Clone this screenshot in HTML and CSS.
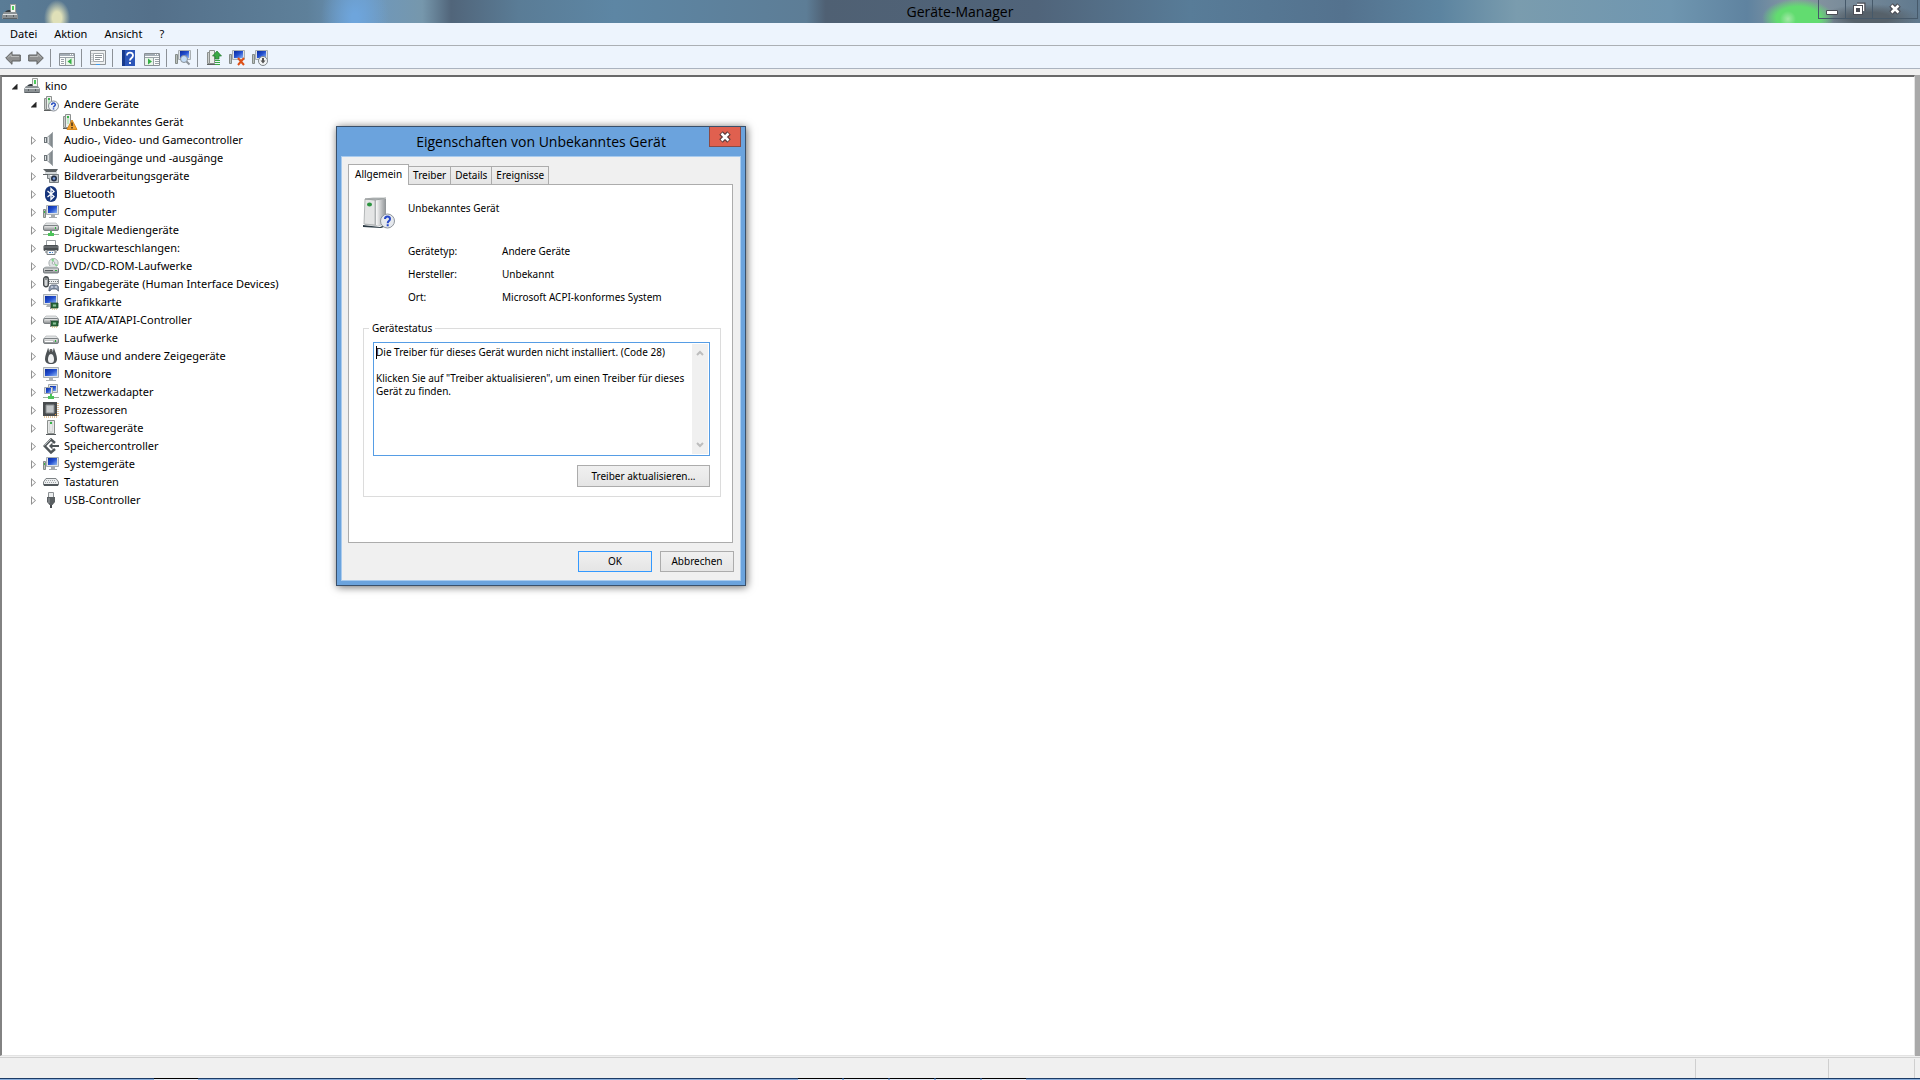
FILE: index.html
```
<!DOCTYPE html>
<html lang="de">

<head>
	<title>Geräte-Manager</title>
	<meta charset="utf-8"/>
	<meta name="viewport" content="width=device-width, initial-scale=1"/>

	<link rel="stylesheet" href="styles.css">
</head>

<body>
	<svg class="defs" width="0" height="0" aria-hidden="true">
		<linearGradient id="metal" x1="0" x2="1"><stop offset="0" stop-color="#fafafa"/><stop offset="1" stop-color="#8e9295"/></linearGradient>
		<linearGradient id="metal-v" x1="0" x2="0" y1="0" y2="1"><stop offset="0" stop-color="#f2f2f2"/><stop offset="1" stop-color="#85898b"/></linearGradient>
		<linearGradient id="cone" x1="0" x2="1"><stop offset="0" stop-color="#b9bfc2"/><stop offset="1" stop-color="#6f767a"/></linearGradient>
		<linearGradient id="screen" x1="0" x2="1" y1="0" y2="1"><stop offset="0" stop-color="#0a2a9c"/><stop offset=".5" stop-color="#2450d0"/><stop offset="1" stop-color="#8fb8f4"/></linearGradient>

		<symbol id="i-pc" viewBox="0 0 16 16">
			<path d="M8.500.5h5v10h-5z" fill="#f4f6f4" stroke="#9a9e9a"/>
			<path d="M10 2h2v4h-2z" fill="#4fc95c"/>
			<path d="M3 8c2-2 3-2 5-2l1 3H3z" fill="#333b40"/>
			<path d="M2 8h12l2 3v4H0v-4z" fill="#8b9194"/>
			<path d="M1 10.500h14" stroke="#dfe3e5"/>
			<path d="M1 14.500h14M4.500 11v2M11.500 11v2" stroke="#5a6064"/>
		</symbol>
		<symbol id="i-tower" viewBox="0 0 16 16">
			<path d="M3.500.5h5v13h-5z" fill="#eceeec" stroke="#8c908e"/>
			<path d="M1.500 2.500h2v11h-2z" fill="#c9ccca" stroke="#8c908e"/>
			<path d="M5 2h2v8H5z" fill="#bfe6c4"/>
			<path d="M5 2h2v2H5z" fill="#39b54a"/>
			<path d="M1 14h8v1H1z" fill="#5c6060"/>
		</symbol>
		<symbol id="i-other" viewBox="0 0 16 16">
			<use href="#i-tower"/>
			<circle cx="10.500" cy="10" r="5" fill="#eef1f6" stroke="#8a919a"/>
			<path d="M8.700 9c0-2.500 3.600-2.500 3.600-.2 0 1.500-1.800 1.200-1.800 2.700M10.500 12.300v1.300" fill="none" stroke="#2a4fc0" stroke-width="1.500"/>
		</symbol>
		<symbol id="i-warn" viewBox="0 0 16 16">
			<use href="#i-tower"/>
			<path d="M10 6l5 9.500H5z" fill="#f0a030" stroke="#d88a20" stroke-linejoin="round"/>
			<path d="M10 8.500v3.500M10 13v1.500" stroke="#3a2c18" stroke-width="1.400"/>
		</symbol>
		<symbol id="i-sound" viewBox="0 0 16 16">
			<path d="M1 5h4v6H1z" fill="#6d7478"/>
			<path d="M4 5l6-5v16l-6-5z" fill="url(#cone)"/>
			<path d="M9.500 1v14" stroke="#9ba2a6"/>
			<path d="M2.500 6v4M5.500 5v6" stroke="#dde1e3"/>
		</symbol>
		<symbol id="i-imaging" viewBox="0 0 16 16">
			<path d="M0 1h15l-2 3H3z" fill="#5c6164"/>
			<path d="M2 4h12v2H2z" fill="#d4d8da"/>
			<path d="M4.500 6.500h11v8h-9v-4h-2z" fill="#c4c8ca" stroke="#777d80"/>
			<path d="M0 6.500h5" stroke="#5c6164"/>
			<circle cx="11" cy="10.500" r="3" fill="#27324a"/>
			<circle cx="11" cy="10.500" r="1.300" fill="#7aa0e0"/>
			<path d="M7 7.500h2" stroke="#fff"/>
		</symbol>
		<symbol id="i-bt" viewBox="0 0 16 16">
			<rect x="2" y="0" width="12" height="16" rx="6" fill="#16357c"/>
			<path d="M4.500 5l6.500 5.500L8 13.500v-11l3 3L4.500 11" fill="none" stroke="#fff" stroke-width="1.300"/>
		</symbol>
		<symbol id="i-monitor" viewBox="0 0 16 16">
			<path d="M.5 1.500h15v10H.5z" fill="#dfe3e6" stroke="#a9afb3"/>
			<path d="M2 3h12v7H2z" fill="url(#screen)"/>
			<path d="M6 12h4v2H6zM3 14h10v1H3z" fill="#aeb3b6"/>
		</symbol>
		<symbol id="i-computer" viewBox="0 0 16 16">
			<path d="M3.500 1.500h12v9h-12z" fill="#dfe3e6" stroke="#a9afb3"/>
			<path d="M5 2h9v7H5z" fill="url(#screen)"/>
			<path d="M8 11h4v2H8zM6 13h8v1H6z" fill="#a6abae"/>
			<path d="M.5 5.500h2v8h-2z" fill="#b9c0bc" stroke="#858b88"/>
			<path d="M1 7h1v2H1z" fill="#39b54a"/>
		</symbol>
		<symbol id="i-disk" viewBox="0 0 16 16">
			<path d="M3 6h10l2.500 3H.5z" fill="#e3e5e6" stroke="#a2a6a8" stroke-width=".6"/>
			<rect x=".5" y="8.500" width="15" height="5" rx="1.500" fill="url(#metal-v)" stroke="#7c8184"/>
			<path d="M12 10h1v2h-1z" fill="#2fb040"/>
			<path d="M2 11.500h8" stroke="#fff"/>
		</symbol>
		<symbol id="i-media" viewBox="0 0 16 16">
			<path d="M3 1h10l2.500 3H.5z" fill="#e3e5e6" stroke="#a2a6a8" stroke-width=".6"/>
			<rect x=".5" y="3.500" width="15" height="5" rx="1.500" fill="url(#metal-v)" stroke="#7c8184"/>
			<path d="M12 5h1v2h-1z" fill="#2fb040"/>
			<path d="M7 9h2v2h2v3H5v-3h2z" fill="#4cc35a"/>
			<path d="M0 12.500h5M11 12.500h5" stroke="#9ab09d"/>
		</symbol>
		<symbol id="i-printer" viewBox="0 0 16 16">
			<path d="M3.500.5h9v5h-9z" fill="#fff" stroke="#9a9fa2"/>
			<rect x=".5" y="5" width="15" height="6" rx="1.500" fill="#4a4f52"/>
			<path d="M2 10h12v3H2z" fill="#b6babc"/>
			<path d="M4 10.500h8v4H4z" fill="#f5f8fb" stroke="#777c80"/>
			<path d="M6 12.500h2M9 12.500h1" stroke="#3c7ec8"/>
			<path d="M1 7h14" stroke="#82878a"/>
		</symbol>
		<symbol id="i-dvd" viewBox="0 0 16 16">
			<circle cx="10.500" cy="5" r="4.600" fill="#dfe4e4" stroke="#a8aeb0"/>
			<path d="M10.500 5L8 1.500l3-1zM10.500 5l4 2-1 2z" fill="#7fd68a"/>
			<circle cx="10.500" cy="5" r="1.300" fill="#fff" stroke="#a8aeb0"/>
			<path d="M3 8h10l2.500 2H.5z" fill="#d8dbdc"/>
			<rect x=".5" y="10" width="15" height="5" rx="1" fill="url(#metal-v)" stroke="#777c80"/>
			<path d="M2 12.500h8" stroke="#555a5d"/>
			<path d="M12 12h2v1h-2z" fill="#2fb040"/>
		</symbol>
		<symbol id="i-hid" viewBox="0 0 16 16">
			<path d="M5 3.500h10.500v4H5z" fill="#eceeef" stroke="#989da0"/>
			<path d="M6 5.500h9" stroke="#777c80" stroke-dasharray="1 1"/>
			<rect x=".7" y=".7" width="4.600" height="10" rx="2.300" fill="#d4d6d7" stroke="#43484b" stroke-width="1.400"/>
			<path d="M3 1v3" stroke="#43484b"/>
			<path d="M6 15c0-4 1-6 3-6h4c2 0 3 2 3 6-2 0-2-2-3-2H9c-1 0-1 2-3 2z" fill="#8b98ac" stroke="#4c586c" stroke-width=".8"/>
			<path d="M8 11h2M12 11h2" stroke="#e8eefc"/>
		</symbol>
		<symbol id="i-chip" viewBox="0 0 16 16">
			<path d="M8 9h7v5H8z" fill="#2c6a3c" stroke="#1d4829" stroke-width=".8"/>
			<path d="M10 10.500h3v2h-3z" fill="#8fc39a"/>
			<path d="M9 15h6" stroke="#c6a84a" stroke-dasharray="1 1"/>
			<path d="M7.500 8v7" stroke="#888"/>
		</symbol>
		<symbol id="i-display" viewBox="0 0 16 16">
			<path d="M.5.5h14v10H.5z" fill="#dfe3e6" stroke="#a9afb3"/>
			<path d="M2 2h11v7H2z" fill="url(#screen)"/>
			<path d="M4 11h3v2H3z" fill="#aeb3b6"/>
			<use href="#i-chip"/>
		</symbol>
		<symbol id="i-ide" viewBox="0 0 16 16">
			<path d="M3 4h10l2.500 2.500H.5z" fill="#e3e5e6" stroke="#a2a6a8" stroke-width=".6"/>
			<rect x=".5" y="6.500" width="15" height="5" rx="1.500" fill="url(#metal-v)" stroke="#7c8184"/>
			<use href="#i-chip"/>
		</symbol>
		<symbol id="i-mouse" viewBox="0 0 16 16">
			<path d="M5 0C4 4 2 7 2 11c0 3 2 5 6 5s6-2 6-5c0-4-2-7-3-11L8 4z" fill="#4d5255"/>
			<path d="M8 6c-2 0-3 3-3 5.500S6 15 8 15s3-1 3-3.500S10 6 8 6z" fill="#eff0f1"/>
			<path d="M5.500 1.500L8 5l2.500-3.500" fill="none" stroke="#b7bcbf"/>
			<path d="M8 1v4" stroke="#333" stroke-width="1.500"/>
		</symbol>
		<symbol id="i-net" viewBox="0 0 16 16">
			<path d="M5.500.5h9v8h-9z" fill="#dfe3e6" stroke="#a2a8ac"/>
			<path d="M7 2h6v5H7z" fill="url(#screen)"/>
			<path d="M1.500 3.500h8v6h-8z" fill="#dfe3e6" stroke="#a2a8ac"/>
			<path d="M3 4h5v5H3z" fill="url(#screen)"/>
			<path d="M7 10h2v2h2v3H5v-3h2z" fill="#4cc35a"/>
			<path d="M0 13.500h5M11 13.500h5" stroke="#9ab09d"/>
		</symbol>
		<symbol id="i-cpu" viewBox="0 0 16 16">
			<path d="M0 0h14v14H0z" fill="#494c4e"/>
			<path d="M3 3h8v8H3z" fill="#c3c6c7" stroke="#888c8e"/>
			<path d="M1 15h14M15 1v14" stroke="#c98c3c" stroke-dasharray="1 1"/>
			<path d="M12 12h1v1h-1z" fill="#f0a040"/>
		</symbol>
		<symbol id="i-soft" viewBox="0 0 16 16">
			<path d="M4.500.5h7v13h-7z" fill="#e6e8e7" stroke="#8c908e"/>
			<path d="M7 2h2v10H7z" fill="#fff" stroke="#b0b4b2" stroke-width=".6"/>
			<path d="M7 2h2v2H7z" fill="#39b54a"/>
			<path d="M3 14h10v1H3z" fill="#555a5c"/>
		</symbol>
		<symbol id="i-storage" viewBox="0 0 16 16">
			<path d="M12 5L8 1.500 1.700 8 8 14.500l4-3.500" fill="none" stroke="#4f5558" stroke-width="2.500"/>
			<path d="M8 8h8" stroke="#4f5558" stroke-width="2"/>
			<path d="M9.500 4.500v7L6 8z" fill="#4f5558"/>
			<path d="M1.500 7.500L8 1" stroke="#b4babd"/>
		</symbol>
		<symbol id="i-keyboard" viewBox="0 0 16 16">
			<path d="M3 4.500h10l2.500 3.500v3H.5V8z" fill="#eceeef" stroke="#7d8285"/>
			<path d="M3 6.500h10M2 8.500h12" stroke="#a0a5a8" stroke-dasharray="1 1"/>
			<path d="M1 11h14" stroke="#50565a" stroke-width="2"/>
		</symbol>
		<symbol id="i-usb" viewBox="0 0 16 16">
			<path d="M5.500.5h5v5h-5z" fill="#eceeef" stroke="#8c9093"/>
			<path d="M4 5h8v5l-2.500 3h-3L4 10z" fill="#5a5f62"/>
			<path d="M6 6v5" stroke="#9ca1a4"/>
			<path d="M8 13v3" stroke="#44494c" stroke-width="2"/>
		</symbol>

		<symbol id="t-arrow" viewBox="0 0 16 16">
			<path d="M.7 8L7 1.700V5h8.300v6H7v3.300z" fill="#8f9090" stroke="#5e6060" stroke-linejoin="round"/>
			<path d="M3 7.500L6 4.500v2h8" fill="none" stroke="#b9baba"/>
		</symbol>
		<symbol id="t-tree" viewBox="0 0 16 16">
			<path d="M.5 3.500h15v12H.5z" fill="#fbfcfc" stroke="#8a9095"/>
			<path d="M1 4h14v2H1z" fill="#a4adb5"/>
			<path d="M11 4.500h1M13 4.500h1" stroke="#fff"/>
			<path d="M1 7.500h14M6.500 8v7" stroke="#9aa2a8"/>
			<path d="M2 9.500h3M2 11.500h3M2 13.500h3" stroke="#9aa2a8"/>
			<path d="M7 8h8v7H7z" fill="#e9f5ea"/>
			<path d="M12.500 8.500v6L8.500 11.500z" fill="#35b045"/>
		</symbol>
		<symbol id="t-props" viewBox="0 0 16 16">
			<path d="M.5.5h15v14H.5z" fill="#eef0f1" stroke="#8f9498"/>
			<path d="M3.500 3.500h10v8h-10z" fill="#fff" stroke="#a6abaf"/>
			<path d="M5 5.500h7M5 7.500h7M5 9.500h5" stroke="#8d9499"/>
			<path d="M2 3v9" stroke="#a6abaf" stroke-dasharray="1 1"/>
			<path d="M6 14h4v1H6z" fill="#3d9cf0"/>
		</symbol>
		<symbol id="t-help" viewBox="0 0 16 16">
			<path d="M1 0h13v16H1z" fill="#2b55b8"/>
			<path d="M1 0h3v16H1z" fill="#173a8c"/>
			<path d="M6 5.500C6 1.500 12 2 12 5.500 12 8 9 8 9 10.500M9 12v2" fill="none" stroke="#fff" stroke-width="1.800"/>
		</symbol>
		<symbol id="t-panel" viewBox="0 0 16 16">
			<path d="M.5 3.500h15v12H.5z" fill="#fbfcfc" stroke="#8a9095"/>
			<path d="M1 4h14v2H1z" fill="#a4adb5"/>
			<path d="M11 4.500h1M13 4.500h1" stroke="#fff"/>
			<path d="M1 7.500h14M9.500 8v7" stroke="#9aa2a8"/>
			<path d="M11 9.500h4M11 11.500h4M11 13.500h4" stroke="#9aa2a8"/>
			<path d="M1 8h8v7H1z" fill="#e9f5ea"/>
			<path d="M4 8.500v6l4-3z" fill="#35b045"/>
		</symbol>
		<symbol id="t-scan" viewBox="0 0 16 16">
			<path d="M3.500.5h12v9h-12z" fill="#dfe3e6" stroke="#a9afb3"/>
			<path d="M5 1h9v7H5z" fill="url(#screen)"/>
			<path d="M.5 4.500h2v9h-2z" fill="#b9c0bc" stroke="#858b88"/>
			<circle cx="9" cy="9" r="3.500" fill="#c3dcf6" stroke="#8b9299"/>
			<path d="M11.500 11.500l3 3" stroke="#8b9299" stroke-width="2"/>
		</symbol>
		<symbol id="t-update" viewBox="0 0 16 16">
			<path d="M3.500.5h5v13h-5z" fill="#eceeec" stroke="#8c908e"/>
			<path d="M1.500 2.500h2v11h-2z" fill="#c9ccca" stroke="#8c908e"/>
			<path d="M1 14h9v1H1z" fill="#5c6060"/>
			<path d="M11 1l4.500 5h-2.500v3H9V6H6.500z" fill="#3aa845" stroke="#257a30" stroke-width=".7"/>
			<path d="M9 10.500h5M9 12.500h5M9 14.500h5" stroke="#3aa845"/>
		</symbol>
		<symbol id="t-remove" viewBox="0 0 16 16">
			<path d="M3.500.5h12v9h-12z" fill="#dfe3e6" stroke="#a9afb3"/>
			<path d="M5 1h9v7H5z" fill="url(#screen)"/>
			<path d="M.5 4.500h2v9h-2z" fill="#b9c0bc" stroke="#858b88"/>
			<path d="M9 8l6 7M15 8l-6 7" stroke="#dd5018" stroke-width="2"/>
		</symbol>
		<symbol id="t-disable" viewBox="0 0 16 16">
			<path d="M3.500.5h12v9h-12z" fill="#dfe3e6" stroke="#a9afb3"/>
			<path d="M5 1h9v7H5z" fill="url(#screen)"/>
			<path d="M.5 4.500h2v9h-2z" fill="#b9c0bc" stroke="#858b88"/>
			<circle cx="11" cy="11" r="4.500" fill="#f3f5f6" stroke="#7f868b"/>
			<path d="M11 8v3" stroke="#555" stroke-width="2"/>
			<path d="M8.500 10.500h5L11 13.500z" fill="#555"/>
		</symbol>
	</svg>

	<header class="titlebar">
		<svg class="icon"><use href="#i-pc"/></svg>
		<h1>Geräte-Manager</h1>
		<div class="window-buttons">
			<button class="min" aria-label="Minimieren"><svg width="14" height="12" viewBox="0 0 14 12"><path d="M1.500 5.500h11v4h-11z" fill="#fff" stroke="#4b4d55"/></svg></button>
			<button class="max" aria-label="Verkleinern"><svg width="14" height="14" viewBox="0 0 14 14"><path d="M5 2.500h6.500V9" fill="none" stroke="#4b4d55" stroke-width="4"/><path d="M5 2.500h6.500V9" fill="none" stroke="#fff" stroke-width="1.500"/><path d="M3 5h6v6H3z" fill="none" stroke="#4b4d55" stroke-width="4"/><path d="M3 5h6v6H3z" fill="#4b4d55" stroke="#fff" stroke-width="2"/></svg></button>
			<button class="close" aria-label="Schließen"><svg width="14" height="12" viewBox="0 0 14 12"><path d="M3 2l8 8M11 2l-8 8" stroke="#4b4d55" stroke-width="5"/><path d="M3.500 2.500l7 7M10.500 2.500l-7 7" stroke="#fff" stroke-width="2.500"/></svg></button>
		</div>
	</header>

	<nav class="menubar">
		<button>Datei</button>
		<button>Aktion</button>
		<button>Ansicht</button>
		<button>?</button>
	</nav>

	<div class="toolbar">
		<button aria-label="Zurück"><svg class="icon"><use href="#t-arrow"/></svg></button>
		<button aria-label="Vorwärts"><svg class="icon flip"><use href="#t-arrow"/></svg></button>
		<span class="sep"></span>
		<button aria-label="Konsolenstruktur"><svg class="icon"><use href="#t-tree"/></svg></button>
		<span class="sep"></span>
		<button aria-label="Eigenschaften"><svg class="icon"><use href="#t-props"/></svg></button>
		<span class="sep"></span>
		<button aria-label="Hilfe"><svg class="icon"><use href="#t-help"/></svg></button>
		<button aria-label="Aktionsbereich"><svg class="icon"><use href="#t-panel"/></svg></button>
		<span class="sep"></span>
		<button aria-label="Nach geänderter Hardware suchen"><svg class="icon"><use href="#t-scan"/></svg></button>
		<span class="sep"></span>
		<button aria-label="Treibersoftware aktualisieren"><svg class="icon"><use href="#t-update"/></svg></button>
		<button aria-label="Deinstallieren"><svg class="icon"><use href="#t-remove"/></svg></button>
		<button aria-label="Deaktivieren"><svg class="icon"><use href="#t-disable"/></svg></button>
	</div>

	<main>
		<ul class="tree">
			<li>
				<div class="node"><button class="toggle open" aria-label="Reduzieren"></button><svg class="icon"><use href="#i-pc"/></svg><span>kino</span></div>
				<ul>
					<li>
						<div class="node"><button class="toggle open" aria-label="Reduzieren"></button><svg class="icon"><use href="#i-other"/></svg><span>Andere Geräte</span></div>
						<ul>
							<li><div class="node leaf"><svg class="icon"><use href="#i-warn"/></svg><span>Unbekanntes Gerät</span></div></li>
						</ul>
					</li>
					<li><div class="node"><button class="toggle" aria-label="Erweitern"></button><svg class="icon"><use href="#i-sound"/></svg><span>Audio-, Video- und Gamecontroller</span></div></li>
					<li><div class="node"><button class="toggle" aria-label="Erweitern"></button><svg class="icon"><use href="#i-sound"/></svg><span>Audioeingänge und -ausgänge</span></div></li>
					<li><div class="node"><button class="toggle" aria-label="Erweitern"></button><svg class="icon"><use href="#i-imaging"/></svg><span>Bildverarbeitungsgeräte</span></div></li>
					<li><div class="node"><button class="toggle" aria-label="Erweitern"></button><svg class="icon"><use href="#i-bt"/></svg><span>Bluetooth</span></div></li>
					<li><div class="node"><button class="toggle" aria-label="Erweitern"></button><svg class="icon"><use href="#i-computer"/></svg><span>Computer</span></div></li>
					<li><div class="node"><button class="toggle" aria-label="Erweitern"></button><svg class="icon"><use href="#i-media"/></svg><span>Digitale Mediengeräte</span></div></li>
					<li><div class="node"><button class="toggle" aria-label="Erweitern"></button><svg class="icon"><use href="#i-printer"/></svg><span>Druckwarteschlangen:</span></div></li>
					<li><div class="node"><button class="toggle" aria-label="Erweitern"></button><svg class="icon"><use href="#i-dvd"/></svg><span>DVD/CD-ROM-Laufwerke</span></div></li>
					<li><div class="node"><button class="toggle" aria-label="Erweitern"></button><svg class="icon"><use href="#i-hid"/></svg><span>Eingabegeräte (Human Interface Devices)</span></div></li>
					<li><div class="node"><button class="toggle" aria-label="Erweitern"></button><svg class="icon"><use href="#i-display"/></svg><span>Grafikkarte</span></div></li>
					<li><div class="node"><button class="toggle" aria-label="Erweitern"></button><svg class="icon"><use href="#i-ide"/></svg><span>IDE ATA/ATAPI-Controller</span></div></li>
					<li><div class="node"><button class="toggle" aria-label="Erweitern"></button><svg class="icon"><use href="#i-disk"/></svg><span>Laufwerke</span></div></li>
					<li><div class="node"><button class="toggle" aria-label="Erweitern"></button><svg class="icon"><use href="#i-mouse"/></svg><span>Mäuse und andere Zeigegeräte</span></div></li>
					<li><div class="node"><button class="toggle" aria-label="Erweitern"></button><svg class="icon"><use href="#i-monitor"/></svg><span>Monitore</span></div></li>
					<li><div class="node"><button class="toggle" aria-label="Erweitern"></button><svg class="icon"><use href="#i-net"/></svg><span>Netzwerkadapter</span></div></li>
					<li><div class="node"><button class="toggle" aria-label="Erweitern"></button><svg class="icon"><use href="#i-cpu"/></svg><span>Prozessoren</span></div></li>
					<li><div class="node"><button class="toggle" aria-label="Erweitern"></button><svg class="icon"><use href="#i-soft"/></svg><span>Softwaregeräte</span></div></li>
					<li><div class="node"><button class="toggle" aria-label="Erweitern"></button><svg class="icon"><use href="#i-storage"/></svg><span>Speichercontroller</span></div></li>
					<li><div class="node"><button class="toggle" aria-label="Erweitern"></button><svg class="icon"><use href="#i-computer"/></svg><span>Systemgeräte</span></div></li>
					<li><div class="node"><button class="toggle" aria-label="Erweitern"></button><svg class="icon"><use href="#i-keyboard"/></svg><span>Tastaturen</span></div></li>
					<li><div class="node"><button class="toggle" aria-label="Erweitern"></button><svg class="icon"><use href="#i-usb"/></svg><span>USB-Controller</span></div></li>
				</ul>
			</li>
		</ul>
	</main>

	<footer class="statusbar">
		<span class="cell wide"></span>
		<span class="cell mid"></span>
		<span class="cell end"></span>
	</footer>
	<div class="taskbar">
		<span class="task first"></span>
		<span class="task"></span>
		<span class="task"></span>
		<span class="task"></span>
		<span class="task"></span>
		<span class="task"></span>
	</div>

	<section class="dialog" role="dialog" aria-labelledby="dialog-title">
		<header class="dialog-head">
			<h2 id="dialog-title">Eigenschaften von Unbekanntes Gerät</h2>
			<button class="dialog-close" aria-label="Schließen"><svg width="14" height="12" viewBox="0 0 14 12"><path d="M3 2l8 8M11 2l-8 8" stroke="#5c3a3a" stroke-width="5"/><path d="M3.500 2.500l7 7M10.500 2.500l-7 7" stroke="#fff" stroke-width="2.500"/></svg></button>
		</header>
		<div class="dialog-body">
			<div class="tabs" role="tablist">
				<button class="tab active" role="tab" aria-selected="true">Allgemein</button>
				<button class="tab" role="tab">Treiber</button>
				<button class="tab" role="tab">Details</button>
				<button class="tab" role="tab">Ereignisse</button>
			</div>
			<div class="page">
				<div class="device">
					<svg width="32" height="32" viewBox="0 0 32 32" aria-hidden="true">
						<path d="M0 28l17 2 7-3v2l-6 2-18-1z" fill="#2c3b44"/>
						<path d="M2 2l11-1 10 1-1 25-6 2-14-1z" fill="#a9adaf"/>
						<path d="M2 2l10 1v25L1 27z" fill="#e4e5e5" stroke="#b4b7b8"/>
						<path d="M13 3l10-1v24l-8 3-2-1z" fill="url(#metal)"/>
						<path d="M2 2l8-1h13l-10 2z" fill="#b4b8b9" stroke="#8f9394" stroke-width=".6"/>
						<ellipse cx="6.500" cy="7.500" rx="2.500" ry="2" fill="#2d9440"/>
						<circle cx="24.500" cy="24" r="7" fill="#e6e9ee" stroke="#8f959c"/>
						<path d="M22 22c0-3.500 5-3.500 5 0 0 2.200-2.300 2-2.300 4.200M24.700 27.300v2" fill="none" stroke="#2748c8" stroke-width="2"/>
					</svg>
					<span>Unbekanntes Gerät</span>
				</div>
				<dl class="props">
					<dt>Gerätetyp:</dt><dd>Andere Geräte</dd>
					<dt>Hersteller:</dt><dd>Unbekannt</dd>
					<dt>Ort:</dt><dd>Microsoft ACPI-konformes System</dd>
				</dl>
				<fieldset class="status">
					<legend><label for="status-text">Gerätestatus</label></legend>
					<div class="status-box">
						<textarea id="status-text" readonly>Die Treiber für dieses Gerät wurden nicht installiert. (Code 28)

Klicken Sie auf "Treiber aktualisieren", um einen Treiber für dieses Gerät zu finden.</textarea>
						<span class="caret"></span>
						<div class="scroll">
							<svg width="8" height="6" viewBox="0 0 8 6"><path d="M1 5l3-3 3 3" fill="none" stroke="#bdbdbd" stroke-width="2"/></svg>
							<svg width="8" height="6" viewBox="0 0 8 6"><path d="M1 1l3 3 3-3" fill="none" stroke="#bdbdbd" stroke-width="2"/></svg>
						</div>
					</div>
					<button class="btn update">Treiber aktualisieren...</button>
				</fieldset>
			</div>
			<div class="actions">
				<button class="btn default">OK</button>
				<button class="btn">Abbrechen</button>
			</div>
		</div>
	</section>
</body>
</html>
```
FILE: styles.css
```
* {
	box-sizing: border-box;
}

body {
	margin: 0;
	min-height: 100vh;
	display: flex;
	flex-direction: column;
	background: #f0f0f0;
	color: #000;
	font: 11px/18px "Noto Sans", "Open Sans", sans-serif;
}

button {
	margin: 0;
	padding: 0;
	border: 0;
	background: none;
	color: inherit;
	font: inherit;
}

h1, h2 {
	margin: 0;
	font: 14px/20px "Open Sans", sans-serif;
}

ul {
	margin: 0;
	padding: 0;
	list-style: none;
}

svg {
	display: block;
}

.defs {
	position: absolute;
}

.icon {
	width: 16px;
	height: 16px;
	flex: none;
}

.flip {
	transform: scaleX(-1);
}

/* main window */
.titlebar {
	height: 23px;
	display: grid;
	grid-template-columns: 1fr auto 1fr;
	align-items: center;
	padding: 0 2px;
	background:
		radial-gradient(ellipse 13px 18px at 57px 18px, #dfe0b8 35%, transparent),
		radial-gradient(ellipse 8px 8px at 1788px 19px, #a2e8a6, transparent),
		radial-gradient(ellipse 36px 19px at 1798px 18px, #62dc70 60%, transparent),
		radial-gradient(ellipse 50px 14px at 1870px 18px, #56616a 40%, transparent),
		radial-gradient(ellipse 34px 50px at 355px 18px, #6ea5dc 10%, transparent),
		linear-gradient(90deg, #5a7c96 0, #54708a 8%, #5e809a 16%, #6d98be 19%, #7697ac 22%, #51657a 23.500%, #5a7c96 27%, #5d86a4 32%, #5d7d96 42%, #4f6073 43%, #50647a 54%, #587c98 62%, #54728e 70%, #5c84a0 75%, #7a9cae 79%, #6f96b0 87%, #5f83a0 91%, #8a98a2 93.500%, #60798e 100%);
}

.titlebar h1 {
	padding-top: 1px;
}

.window-buttons {
	justify-self: end;
	align-self: start;
	height: 19px;
	display: flex;
	border: 1px solid #46596a;
	border-top: 0;
}

.window-buttons button {
	display: flex;
	align-items: center;
	justify-content: center;
}

.window-buttons .min,
.window-buttons .max {
	width: 27px;
	border-right: 1px solid #46596a;
}

.window-buttons .min {
	padding-top: 4px;
}

.window-buttons .close {
	width: 44px;
}

.menubar {
	height: 23px;
	display: flex;
	align-items: center;
	gap: 17px;
	padding: 0 10px;
	background: #edf4fd;
	border-bottom: 1px solid #abafb4;
}

.toolbar {
	height: 23px;
	display: flex;
	align-items: center;
	gap: 7px;
	padding: 2px 5px 0;
	background: #edf4fd;
	border-bottom: 1px solid #abb3bf;
}

.sep {
	width: 1px;
	height: 18px;
	margin: 0 1px 0 -1px;
	background: #8c9197;
}

main {
	flex: 1;
	margin: 6px 5px 1px 0;
	padding-left: 6px;
	background: #fff;
	border: 1px solid #e3e3e3;
	border-top: 2px solid #696969;
	border-left: 2px solid #828282;
	box-shadow: 5px 0 #a9a9a9;
	clip-path: inset(0 -5px 0 0);
}

.tree ul {
	padding-left: 19px;
}

.node {
	height: 18px;
	display: flex;
	align-items: center;
	white-space: nowrap;
}

.node .icon {
	margin-right: 5px;
}

.leaf {
	padding-left: 16px;
}

.toggle {
	width: 13px;
	height: 16px;
	margin-right: 3px;
	display: flex;
	align-items: center;
	justify-content: center;
}

.toggle::before {
	content: "";
	width: 5px;
	height: 9px;
	margin-top: 1px;
	background: #909090;
	clip-path: polygon(0 0, 100% 50%, 0 100%, 0 12%, 1px 22%, 1px 78%, 78% 50%, 0 12%);
}

.toggle.open::before {
	width: 6px;
	height: 6px;
	background: #262626;
	clip-path: polygon(100% 0, 100% 100%, 0 100%);
}

.statusbar {
	height: 21px;
	display: flex;
	padding: 1px 5px 0 0;
	border-top: 1px solid #d0d0d0;
}

.cell {
	border-right: 1px solid #cfcfcf;
}

.wide {
	flex: 1;
}

.mid {
	width: 133px;
}

.end {
	width: 86px;
}

.taskbar {
	height: 2px;
	display: flex;
	gap: 2px;
	background: #8aaedb;
	border-top: 1px solid #1d3c66;
}

.task {
	width: 44px;
	height: 2px;
	margin-top: -1px;
	background: #e4ecf6;
	border-top: 1px solid #000;
}

.task.first {
	margin-left: 154px;
	margin-right: 598px;
}

/* properties window */
.dialog {
	position: absolute;
	left: 336px;
	top: 126px;
	width: 410px;
	padding: 0 4px 4px;
	background: #6ba3dd;
	border: 1px solid #39506b;
	box-shadow: 1px 1px 8px rgba(0, 0, 0, .6);
	font-size: 10px;
	line-height: 13px;
}

.dialog-head {
	height: 29px;
	display: flex;
	justify-content: center;
}

.dialog-head h2 {
	padding-top: 5px;
}

.dialog-close {
	position: absolute;
	top: 0;
	right: 4px;
	width: 32px;
	height: 20px;
	display: flex;
	align-items: center;
	justify-content: center;
	background: #e0604f;
	border: 1px solid #8c4a44;
	border-top: 0;
}

.dialog-body {
	padding: 7px 6px 8px;
	background: #f0f0f0;
	border: 1px solid #a9cbee;
}

.tabs {
	display: flex;
	align-items: flex-end;
	height: 20px;
}

.tab {
	height: 18px;
	padding: 0 4px;
	background: linear-gradient(#f0f0f0, #e5e5e5);
	border: 1px solid #acacac;
	border-left: 0;
	border-bottom: 0;
}

.tab.active {
	height: 21px;
	margin-bottom: -1px;
	padding: 0 6px 2px;
	background: #fff;
	border-left: 1px solid #acacac;
	z-index: 1;
}

.page {
	height: 359px;
	padding: 12px 11px 0 14px;
	background: #fff;
	border: 1px solid #acacac;
	margin-right: 1px;
}

.device {
	display: flex;
	gap: 13px;
	line-height: 22px;
}

.props {
	display: grid;
	grid-template-columns: 94px 1fr;
	row-gap: 10px;
	margin: 16px 0 18px 45px;
}

.props dd {
	margin: 0;
}

.status {
	margin: 0;
	min-width: 0;
	padding: 7px 10px 9px 9px;
	border: 1px solid #dcdcdc;
}

.status legend {
	margin-left: -4px;
	padding: 0 3px;
}

.status-box {
	position: relative;
	height: 114px;
	display: flex;
	padding: 1px;
	border: 1px solid #569de5;
}

.status-box textarea {
	flex: 1;
	min-width: 0;
	padding: 2px 0 0 1px;
	border: 0;
	outline: 0;
	resize: none;
	overflow: hidden;
	background: #fff;
	color: #000;
	font: inherit;
}

.caret {
	position: absolute;
	left: 2px;
	top: 3px;
	width: 1px;
	height: 13px;
	background: #000;
}

.scroll {
	width: 16px;
	display: flex;
	flex-direction: column;
	justify-content: space-between;
	align-items: center;
	padding: 6px 0;
	background: #f0f0f0;
}

.btn {
	min-width: 74px;
	height: 21px;
	background: linear-gradient(#f0f0f0, #e5e5e5);
	border: 1px solid #acacac;
}

.btn.default {
	border-color: #3399ff;
}

.btn.update {
	display: block;
	width: 133px;
	height: 22px;
	margin: 9px 0 0 auto;
}

.actions {
	display: flex;
	justify-content: flex-end;
	gap: 8px;
	padding-top: 8px;
}
```
